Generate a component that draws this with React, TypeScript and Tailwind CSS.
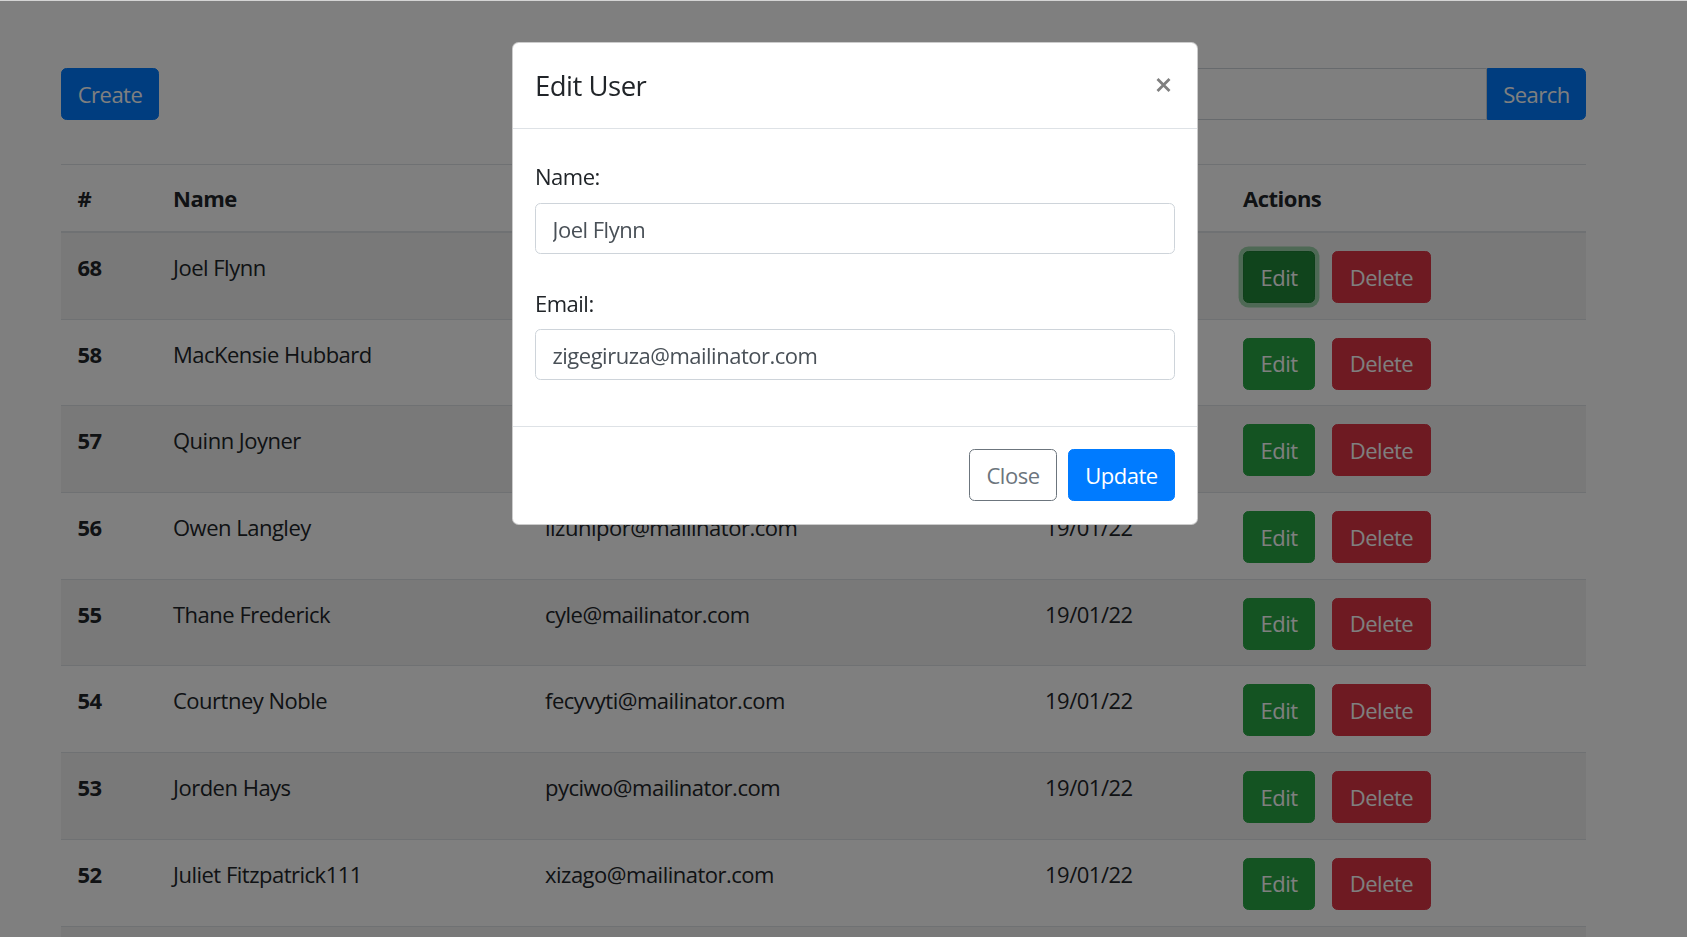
import React from 'react'

type User = {
  id: number
  name: string
  email: string
  date: string
}

const users: User[] = [
  { id: 68, name: 'Joel Flynn', email: 'zigegiruza@mailinator.com', date: '19/01/22' },
  { id: 58, name: 'MacKensie Hubbard', email: 'bedyjoxe@mailinator.com', date: '19/01/22' },
  { id: 57, name: 'Quinn Joyner', email: 'wenykon@mailinator.com', date: '19/01/22' },
  { id: 56, name: 'Owen Langley', email: 'lizunipor@mailinator.com', date: '19/01/22' },
  { id: 55, name: 'Thane Frederick', email: 'cyle@mailinator.com', date: '19/01/22' },
  { id: 54, name: 'Courtney Noble', email: 'fecyvyti@mailinator.com', date: '19/01/22' },
  { id: 53, name: 'Jorden Hays', email: 'pyciwo@mailinator.com', date: '19/01/22' },
  { id: 52, name: 'Juliet Fitzpatrick111', email: 'xizago@mailinator.com', date: '19/01/22' },
  { id: 51, name: 'Ria Mccarthy', email: 'huvy@mailinator.com', date: '19/01/22' },
]

const cols = 'grid grid-cols-[95.5px_372px_500px_198px_1fr]'

export default function App() {
  return (
    <div className="relative h-screen overflow-hidden bg-white text-[22px] leading-[33px] tracking-[-0.5px] text-[#212529] font-['Open_Sans',sans-serif]">
      <div className="h-px bg-[#d4d4d4]" />

      <div className="ml-[61px] w-[1525px] pt-[67px]">
        <div className="flex items-start justify-between">
          <button className="h-[52px] w-[98px] rounded-[5.5px] border border-[#007bff] bg-[#007bff] text-white">
            Create
          </button>

          <div className="flex">
            <input
              className="h-[52px] w-[620px] rounded-l-[5.5px] border border-[#ced4da] px-[16.5px] text-[#495057] outline-none"
              defaultValue=""
            />
            <button className="h-[52px] w-[99px] rounded-r-[5.5px] border border-[#007bff] bg-[#007bff] text-white">
              Search
            </button>
          </div>
        </div>

        <div className="mt-[44px]">
          <div className={`${cols} border-t border-b-2 border-[#dee2e6] pt-[17px] pb-[16px] font-bold`}>
            <div className="pl-[16.5px]">#</div>
            <div className="pl-[16.5px]">Name</div>
            <div className="pl-[16.5px]">Email</div>
            <div className="pl-[16.5px]">Date</div>
            <div className="pl-[16.5px]">Actions</div>
          </div>

          {users.map((user, i) => (
            <div
              key={user.id}
              className={`${cols} h-[86.7px] border-b border-[#dee2e6] pt-[18px] ${i % 2 === 0 ? 'bg-[#f2f2f2]' : ''}`}
            >
              <div className="pl-[16.5px] font-bold">{user.id}</div>
              <div className="pl-[16.5px]">{user.name}</div>
              <div className="pl-[16.5px]">{user.email}</div>
              <div className="pl-[16.5px]">{user.date}</div>
              <div className="flex gap-[17px] pl-[16.5px]">
                <button
                  className={
                    i === 0
                      ? 'h-[52px] w-[72px] rounded-[5.5px] border border-[#1e7e34] bg-[#218838] text-white shadow-[0_0_0_4.4px_rgba(72,180,97,0.5)]'
                      : 'h-[52px] w-[72px] rounded-[5.5px] border border-[#28a745] bg-[#28a745] text-white'
                  }
                >
                  Edit
                </button>
                <button className="h-[52px] w-[99px] rounded-[5.5px] border border-[#dc3545] bg-[#dc3545] text-white">
                  Delete
                </button>
              </div>
            </div>
          ))}
        </div>
      </div>

      {/* modal */}
      <div className="fixed inset-x-0 bottom-0 top-px bg-black/50 pl-[512px] pt-[41px]">
        <div className="w-[686px] rounded-[6.6px] border border-black/20 bg-white">
          <div className="flex items-start justify-between border-b border-[#dee2e6] px-[22px] pt-[22px] pb-[22px]">
            <h5 className="text-[27.5px] leading-[41px] font-medium">Edit User</h5>
            <svg width="15" height="14" viewBox="0 0 15 14" className="mt-[13px] mr-[4px]">
              <path d="M1.5 1 L13.5 13 M13.5 1 L1.5 13" stroke="#000" strokeOpacity="0.5" strokeWidth="2.8" />
            </svg>
          </div>

          <div className="px-[22px] pt-[31px] pb-[46px]">
            <label className="mb-[10px] block">Name:</label>
            <input
              className="block h-[51px] w-full rounded-[5.5px] border border-[#ced4da] px-[16.5px] text-[#495057] outline-none"
              defaultValue="Joel Flynn"
            />
            <label className="mt-[33px] mb-[9px] block">Email:</label>
            <input
              className="block h-[51px] w-full rounded-[5.5px] border border-[#ced4da] px-[16.5px] text-[#495057] outline-none"
              defaultValue="zigegiruza@mailinator.com"
            />
          </div>

          <div className="flex justify-end gap-[11px] border-t border-[#dee2e6] px-[22px] pt-[22px] pb-[23px]">
            <button className="h-[52px] w-[88px] rounded-[5.5px] border border-[#6c757d] bg-white text-[#6c757d]">
              Close
            </button>
            <button className="h-[52px] w-[107px] rounded-[5.5px] border border-[#007bff] bg-[#007bff] text-white">
              Update
            </button>
          </div>
        </div>
      </div>
    </div>
  )
}
